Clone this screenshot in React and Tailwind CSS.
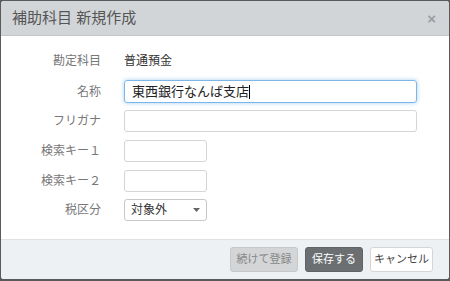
import React from 'react';

export default function App() {
  const font = { fontFamily: '"Liberation Sans", "Noto Sans CJK JP", sans-serif' };

  return (
    <div className="w-[450px] h-[281px] bg-[#5a5a5a] p-px pb-[2px]" style={font}>
      <div className="h-full bg-white rounded-[3px] overflow-hidden flex flex-col">
        {/* Header */}
        <div className="h-[35px] bg-[#d2d5d8] border-b border-[#c3c6c9] flex items-center justify-between pl-[11px] pr-[13px] shrink-0">
          <span className="text-[15px] text-[#555]">補助科目 新規作成</span>
          <span className="text-[15px] text-[#9a9da0] font-bold leading-none">×</span>
        </div>

        {/* Body */}
        <div className="flex-1 pt-[16px] text-[12px] text-[#333]">
          <div className="flex items-center h-[18px]">
            <div className="w-[100px] text-right text-[#777]">勘定科目</div>
            <div className="ml-[23px]">普通預金</div>
          </div>

          <div className="flex items-center mt-[10px]">
            <div className="w-[100px] text-right text-[#777]">名称</div>
            <div className="ml-[23px] w-[293px] h-[23px] border border-[#7fb6e8] rounded-[3px] shadow-[0_0_4px_rgba(102,175,233,0.6)] flex items-center px-[7px] text-[13px] text-[#222]">
              東西銀行なんば支店<span className="w-px h-[14px] bg-black" />
            </div>
          </div>

          <div className="flex items-center mt-[7px]">
            <div className="w-[100px] text-right text-[#777]">フリガナ</div>
            <div className="ml-[23px] w-[293px] h-[22px] border border-[#d5d5d5] rounded-[3px]" />
          </div>

          <div className="flex items-center mt-[8px]">
            <div className="w-[100px] text-right text-[#777]">検索キー１</div>
            <div className="ml-[23px] w-[83px] h-[22px] border border-[#d5d5d5] rounded-[3px]" />
          </div>

          <div className="flex items-center mt-[8px]">
            <div className="w-[100px] text-right text-[#777]">検索キー２</div>
            <div className="ml-[23px] w-[83px] h-[22px] border border-[#d5d5d5] rounded-[3px]" />
          </div>

          <div className="flex items-center mt-[7px]">
            <div className="w-[100px] text-right text-[#777]">税区分</div>
            <div className="ml-[23px] w-[83px] h-[22px] border border-[#c8c8c8] rounded-[3px] flex items-center justify-between pl-[6px] pr-[6px]">
              <span className="text-[#333]">対象外</span>
              <svg width="7" height="4" viewBox="0 0 7 4"><path d="M0 0h7L3.5 4z" fill="#666" /></svg>
            </div>
          </div>
        </div>

        {/* Footer */}
        <div className="h-[40px] bg-[#eef1f4] border-t border-[#dfe2e5] flex items-center justify-end gap-[7px] pr-[16px] shrink-0 text-[11px]">
          <button className="w-[68px] h-[25px] rounded-[3px] bg-[#d3d5d7] border border-[#c6c8ca] text-[#888]">続けて登録</button>
          <button className="w-[58px] h-[25px] rounded-[3px] bg-[#6b6f72] border border-[#5f6366] text-white">保存する</button>
          <button className="w-[63px] h-[25px] rounded-[3px] bg-white border border-[#d5d5d5] text-[#444]">キャンセル</button>
        </div>
      </div>
    </div>
  );
}
